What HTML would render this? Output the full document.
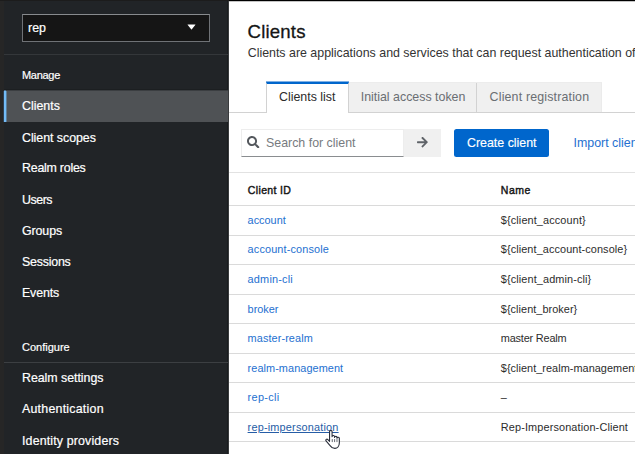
<!DOCTYPE html>
<html lang="en">
<head>
<meta charset="utf-8">
<title>Clients</title>
<style>
*{box-sizing:border-box;margin:0;padding:0}
html,body{width:635px;height:454px;overflow:hidden;background:#fff}
body{font-family:"Liberation Sans",sans-serif;position:relative;color:#151515}
.abs{position:absolute}
.t{position:absolute;white-space:nowrap;line-height:1}
.w{-webkit-text-stroke:.2px #fff}
#side{left:0;top:0;width:228px;height:454px;background:#212427}
#strip{left:0;top:0;width:4px;height:454px;background:#262626}
.sep{left:4px;width:224px;height:1px;background:#3c3f42}
.line{left:229px;width:406px;height:1px;background:#dadada}
</style>
</head>
<body>
<div class="abs" id="side"></div>
<div class="abs" style="left:227px;top:0;width:1px;height:454px;background:#191c1e"></div>
<div class="abs" style="left:228px;top:0;width:1px;height:454px;background:#3a3c3e"></div>
<div class="abs" id="strip"></div>
<div class="abs" style="left:22px;top:14px;width:188px;height:28px;background:#151515;border:1px solid #6f7276;border-top-color:#888b8e"></div>
<svg class="abs" style="left:187px;top:24.100px" width="9" height="6" viewBox="0 0 9 6"><path d="M0.700 0.400h7.600q0.500 0 0.150 0.400L4.850 5.200q-0.350 0.350 -0.700 0L0.550 0.800q-0.350 -0.400 0.150 -0.400z" fill="#fff"/></svg>
<div class="abs sep" style="top:54px;background:#34373a"></div>
<div class="abs" style="left:4px;top:89px;width:224px;height:1px;background:#1c1f21"></div>
<div class="abs" style="left:4px;top:90px;width:224px;height:32px;background:#4f5255"></div>
<div class="abs" style="left:4px;top:90px;width:224px;height:1px;background:#3b3e41"></div>
<div class="abs" style="left:4px;top:91px;width:2px;height:31px;background:#73bcf7"></div>
<div class="abs" style="left:4px;top:90px;width:2px;height:1px;background:#4a6f8f"></div>
<div class="abs" style="left:6px;top:91px;width:1px;height:31px;background:#5d7d98"></div>
<div class="abs" style="left:3px;top:91px;width:1px;height:31px;background:#2f4052"></div>
<div class="abs sep" style="top:362px"></div>
<div class="t w" style="left:28px;top:21.5px;font-size:12.4px;color:#fff;">rep</div>
<div class="t w" style="left:22px;top:70.3px;font-size:11px;color:#fff;letter-spacing:-0.3px;">Manage</div>
<div class="t w" style="left:22px;top:100px;font-size:12.4px;color:#fff;">Clients</div>
<div class="t w" style="left:22px;top:132px;font-size:12.4px;color:#fff;letter-spacing:-0.04px;">Client scopes</div>
<div class="t w" style="left:22px;top:162px;font-size:12.4px;color:#fff;letter-spacing:-0.23px;">Realm roles</div>
<div class="t w" style="left:22px;top:194px;font-size:12.4px;color:#fff;letter-spacing:-0.45px;">Users</div>
<div class="t w" style="left:22px;top:225px;font-size:12.4px;color:#fff;letter-spacing:-0.1px;">Groups</div>
<div class="t w" style="left:22px;top:256px;font-size:12.4px;color:#fff;letter-spacing:-0.21px;">Sessions</div>
<div class="t w" style="left:22px;top:287px;font-size:12.4px;color:#fff;letter-spacing:-0.14px;">Events</div>
<div class="t w" style="left:22px;top:342.3px;font-size:11px;color:#fff;">Configure</div>
<div class="t w" style="left:22px;top:372px;font-size:12.4px;color:#fff;letter-spacing:-0.04px;">Realm settings</div>
<div class="t w" style="left:22px;top:403px;font-size:12.4px;color:#fff;letter-spacing:0.23px;">Authentication</div>
<div class="t w" style="left:22px;top:435px;font-size:12.4px;color:#fff;letter-spacing:0.15px;">Identity providers</div>
<div class="t" id="h1" style="left:247.5px;top:23px;font-size:18.6px;color:#151515;letter-spacing:0.2px;-webkit-text-stroke:.3px #151515;">Clients</div>
<div class="t" id="desc" style="left:247.7px;top:47.3px;font-size:12.4px;color:#333;">Clients are applications and services that can request authentication of a user.</div>

<div class="abs" style="left:229px;top:112px;width:406px;height:1px;background:#d2d2d2"></div>
<div class="abs" style="left:349px;top:82px;width:253px;height:30px;background:#f0f0f0;border-top:1px solid #ececec;border-right:1px solid #ebebeb"></div>
<div class="abs" style="left:266px;top:82px;width:83px;height:31px;background:#fff;border-left:1px solid #d2d2d2;border-right:1px solid #d2d2d2;border-top:2px solid #0066cc"></div>
<div class="abs" style="left:476px;top:83px;width:1px;height:29px;background:#d2d2d2"></div>
<div class="abs" style="left:266px;top:81px;width:83px;height:1px;background:#7fb0e4"></div>
<div class="t" id="tab1" style="left:279px;top:91px;font-size:12.4px;color:#2b2b2b;">Clients list</div>
<div class="t" id="tab2" style="left:360.7px;top:91px;font-size:12.4px;color:#6a6e73;">Initial access token</div>
<div class="t" id="tab3" style="left:489.6px;top:91px;font-size:12.4px;color:#6a6e73;letter-spacing:0.17px;">Client registration</div>

<div class="abs" style="left:241px;top:129px;width:163px;height:28px;background:#fff;border:1px solid #ededed;border-bottom-color:#8a8d90"></div>
<svg class="abs" style="left:247.400px;top:136px" width="12.400" height="12.400" viewBox="0 0 512 512"><path fill="#53575c" d="M505 442.700L405.300 343c-4.500-4.500-10.600-7-17-7H372c27.600-35.300 44-79.700 44-128C416 93.100 322.900 0 208 0S0 93.100 0 208s93.100 208 208 208c48.300 0 92.700-16.400 128-44v16.300c0 6.400 2.500 12.500 7 17l99.700 99.700c9.400 9.400 24.600 9.400 33.900 0l28.300-28.300c9.400-9.400 9.400-24.600.1-34zM208 336c-70.700 0-128-57.200-128-128 0-70.700 57.200-128 128-128 70.700 0 128 57.200 128 128 0 70.700-57.200 128-128 128z"/></svg>
<div class="abs" style="left:404px;top:129px;width:37px;height:28px;background:#f0f0f0"></div>
<svg class="abs" style="left:417.200px;top:136px" width="10.850" height="12.400" viewBox="0 0 448 512"><path fill="#5f6368" d="M190.500 66.900l22.200-22.200c9.400-9.400 24.600-9.400 33.900 0L441 239c9.400 9.400 9.400 24.600 0 33.900L246.600 467.300c-9.400 9.400-24.600 9.400-33.900 0l-22.200-22.200c-9.500-9.500-9.300-25 .4-34.300L311.400 296H24c-13.300 0-24-10.700-24-24v-32c0-13.300 10.700-24 24-24h287.400L190.900 101.200c-9.800-9.300-10-24.800-.4-34.300z"/></svg>
<div class="abs" style="left:453.700px;top:129px;width:95.500px;height:28px;background:#0066cc;border-radius:2.500px"></div>
<div class="t" id="ph" style="left:266px;top:137.3px;font-size:12.4px;color:#777b80;">Search for client</div>
<div class="t" id="btn" style="left:467px;top:137.3px;font-size:12.4px;color:#ffffff;-webkit-text-stroke:.15px #fff;">Create client</div>
<div class="t" id="imp" style="left:573.5px;top:137.3px;font-size:12.4px;color:#2470d0;">Import client</div>
<div class="abs line" style="top:172px;background:#e2e2e2"></div>
<div class="t" id="th1" style="left:247.8px;top:185px;font-size:10.5px;color:#151515;letter-spacing:0.36px;-webkit-text-stroke:.42px #151515;">Client ID</div>
<div class="t" id="th2" style="left:500.8px;top:185px;font-size:10.5px;color:#151515;letter-spacing:0.5px;-webkit-text-stroke:.42px #151515;">Name</div>
<div class="abs line" style="top:205px"></div>
<div class="abs line" style="top:235px"></div>
<div class="abs line" style="top:264px"></div>
<div class="abs line" style="top:294px"></div>
<div class="abs line" style="top:323px"></div>
<div class="abs line" style="top:353px"></div>
<div class="abs line" style="top:382px"></div>
<div class="abs line" style="top:412px"></div>
<div class="abs line" style="top:441px"></div>
<div class="t" style="left:247.6px;top:215.2px;font-size:10.9px;color:#2470d0;">account</div>
<div class="t" style="left:500.8px;top:215.2px;font-size:10.9px;color:#2c2c2c;letter-spacing:0.12px;">${client_account}</div>
<div class="t" style="left:247.6px;top:244.2px;font-size:10.9px;color:#2470d0;letter-spacing:0.14px;">account-console</div>
<div class="t" style="left:500.8px;top:244.2px;font-size:10.9px;color:#2c2c2c;letter-spacing:0.09px;">${client_account-console}</div>
<div class="t" style="left:247.6px;top:274.2px;font-size:10.9px;color:#2470d0;letter-spacing:0.2px;">admin-cli</div>
<div class="t" style="left:500.8px;top:274.2px;font-size:10.9px;color:#2c2c2c;letter-spacing:0.11px;">${client_admin-cli}</div>
<div class="t" style="left:247.6px;top:304.2px;font-size:10.9px;color:#2470d0;">broker</div>
<div class="t" style="left:500.8px;top:304.2px;font-size:10.9px;color:#2c2c2c;letter-spacing:0.05px;">${client_broker}</div>
<div class="t" style="left:247.6px;top:333.2px;font-size:10.9px;color:#2470d0;letter-spacing:0.09px;">master-realm</div>
<div class="t" style="left:500.8px;top:333.2px;font-size:10.9px;color:#2c2c2c;letter-spacing:-0.18px;">master Realm</div>
<div class="t" style="left:247.6px;top:363.2px;font-size:10.9px;color:#2470d0;letter-spacing:0.07px;">realm-management</div>
<div class="t" style="left:500.8px;top:363.2px;font-size:10.9px;color:#2c2c2c;letter-spacing:0.04px;">${client_realm-management}</div>
<div class="t" style="left:247.6px;top:392.2px;font-size:10.9px;color:#2470d0;letter-spacing:0.32px;">rep-cli</div>
<div class="t" style="left:500.8px;top:392.2px;font-size:10.9px;color:#2c2c2c;">–</div>
<div class="t" style="left:247.6px;top:422.2px;font-size:10.9px;color:#265da6;letter-spacing:0.19px;text-decoration:underline;text-decoration-thickness:1px;text-underline-offset:1px;">rep-impersonation</div>
<div class="t" style="left:500.8px;top:422.2px;font-size:10.9px;color:#2c2c2c;letter-spacing:0.13px;">Rep-Impersonation-Client</div>
<div class="t" style="left:247.6px;top:452.8px;font-size:10.9px;color:#2470d0;letter-spacing:0.1px;">security-admin-console</div>
<svg class="abs" style="left:324.600px;top:429.700px" width="15.300" height="19.200" viewBox="0 0 17.500 21.500"><path d="M5.200 1.800a1.450 1.450 0 0 1 2.900 0V7.400a1.400 1.400 0 0 1 2.800 0.300V8.300a1.400 1.400 0 0 1 2.800 0.300V9.300a1.350 1.350 0 0 1 2.700 0.400V14.500C16.400 18.500 14 20.800 11.300 20.800C8.500 20.800 7.300 19.800 5.800 17.600L1.200 12.300c-0.900-1.600 0.900-2.700 2.100-1.500L5.200 12.700z" fill="#fff" stroke="#2a2e3a" stroke-width="1.250" stroke-linejoin="round"/><path d="M8.300 10.200v3.400M11 10.200v3.400M13.700 10.200v3.400" stroke="#3a3e4a" stroke-width="0.900" fill="none"/></svg>
<div class="abs" style="left:229px;top:0;width:406px;height:1px;background:#000"></div>
<div class="abs" style="left:229px;top:1px;width:406px;height:1px;background:#c4c4c4"></div>
<div class="abs" style="left:0;top:0;width:229px;height:1px;background:#1c1c1c"></div>
</body>
</html>
